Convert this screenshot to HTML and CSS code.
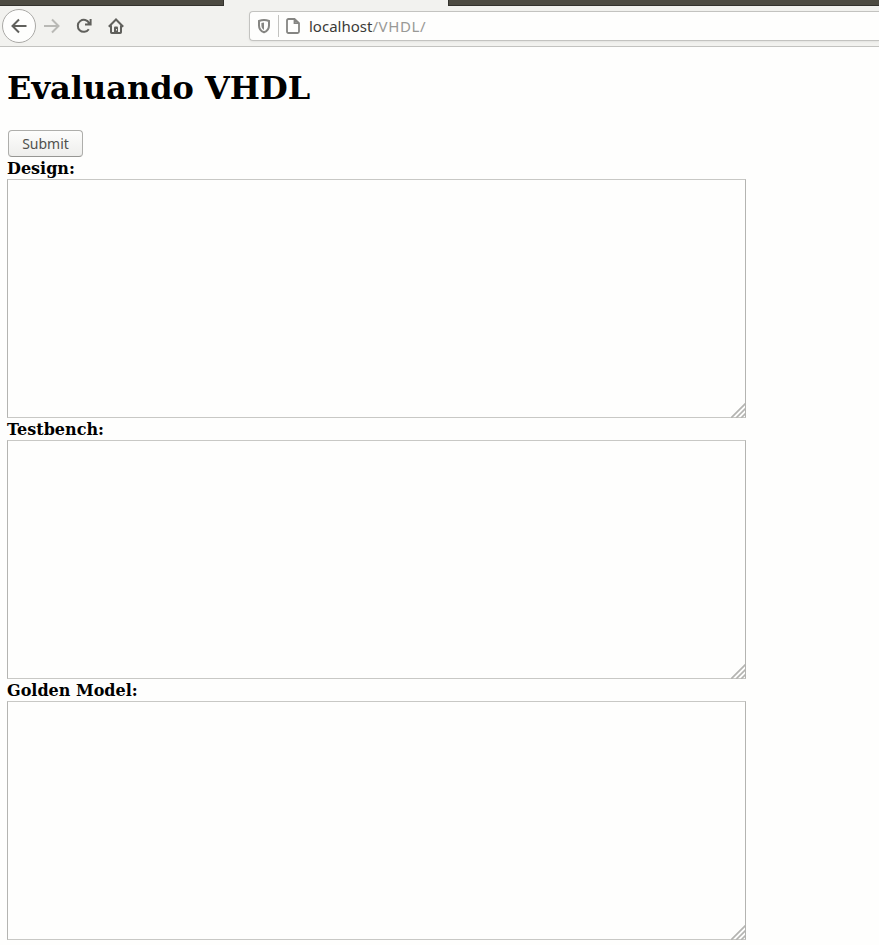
FILE: index.html
```html
<!DOCTYPE html>
<html lang="es">
<head>
<meta charset="utf-8">
<title>Evaluando VHDL</title>
<link rel="stylesheet" href="styles.css">
</head>
<body>
<header class="browser">
  <div class="tabs"><div class="tab-rest tab-left"></div><div class="tab-active"></div><div class="tab-rest tab-right"></div></div>
  <nav class="toolbar">
    <div class="back">
      <svg width="16" height="16" viewBox="0 0 16 16"><path d="M15.5 8H1.5M8 1.5L1.5 8L8 14.5"/></svg>
    </div>
    <svg class="forward" width="16" height="16" viewBox="0 0 16 16"><path d="M0 8H14.5M8 1.5L14.5 8L8 14.5"/></svg>
    <svg class="reload" width="16" height="16" viewBox="0 0 16 16"><path d="M13.2 5.2A6 6 0 1 0 12.8 11.2M14.6 1V6.6H9"/><path class="solid" d="M14 4V6H11Z"/></svg>
    <svg class="home" width="16" height="16" viewBox="0 0 16 16"><path d="M.8 8.7L8 1.5L15.2 8.7M3 7.5V14.2Q3 15 3.8 15H12.2Q13 15 13 14.2V7.5"/><path class="solid" d="M6 9.5Q6 8.5 7 8.5H9Q10 8.5 10 9.5V15H6Z"/><path class="knob" d="M8.5 11V12.5"/></svg>
    <div class="address">
      <svg class="shield" width="14" height="16" viewBox="0 0 14 16"><path d="M7 2C5 2 3.5 2.4 2 3V7.5C2 11 4 13.2 7 14.3C10 13.2 12 11 12 7.5V3C10.5 2.4 9 2 7 2Z"/><path class="solid" d="M7 4.5V12C5.2 11 4.4 9.5 4.4 7.3V4.9Z"/></svg>
      <span class="divider"></span>
      <svg class="page-icon" width="16" height="18" viewBox="0 0 16 18"><path d="M3.5 2H9.5L14 6.2V14.5Q14 16 12.5 16H3.5Q2 16 2 14.5V3.5Q2 2 3.5 2ZM9.5 2V6.2H14"/></svg>
      <span class="url">localhost<span class="path">/VHDL/</span></span>
    </div>
  </nav>
</header>
<main>
  <h1>Evaluando VHDL</h1>
  <form>
    <button type="button">Submit</button>
    <label for="design">Design:</label>
    <div class="field"><textarea id="design"></textarea><svg class="grip" width="15" height="15" viewBox="0 0 15 15"><path d="M0 15L15 0M5 15L15 5M10 15L15 10"/></svg></div>
    <label for="testbench">Testbench:</label>
    <div class="field"><textarea id="testbench"></textarea><svg class="grip" width="15" height="15" viewBox="0 0 15 15"><path d="M0 15L15 0M5 15L15 5M10 15L15 10"/></svg></div>
    <label for="golden">Golden Model:</label>
    <div class="field"><textarea id="golden"></textarea><svg class="grip" width="15" height="15" viewBox="0 0 15 15"><path d="M0 15L15 0M5 15L15 5M10 15L15 10"/></svg></div>
  </form>
</main>
</body>
</html>
```

FILE: styles.css
```css
* { box-sizing: border-box; }
body {
  margin: 0;
  height: 945px;
  overflow: hidden;
  background: #fefefd;
  color: #000;
  font-family: "DejaVu Serif", serif;
}
svg { display: block; flex: none; fill: none; stroke: #60605c; stroke-width: 2; }
.solid { fill: #60605c; stroke: none; }

.browser { height: 47px; background: #f2f2ef; border-bottom: 1px solid #c3c3c0; }
.tabs { display: flex; height: 6px; }
.tab-rest { background: #4d4b42; border-bottom: 1px solid #33322d; }
.tab-left { width: 224px; border-right: 1px solid #33322d; }
.tab-active { width: 224px; }
.tab-right { flex: 1; border-left: 1px solid #33322d; }

.toolbar { display: flex; align-items: center; height: 40px; padding-left: 2px; }
.back {
  display: flex;
  align-items: center;
  justify-content: center;
  width: 34px;
  height: 34px;
  border: 1px solid #aaa9a6;
  border-radius: 50%;
  background: #fefefd;
}
.forward { margin-left: 8px; stroke: #b9b9b5; }
.reload { margin-left: 16px; }
.home { margin-left: 16px; }
.home .knob { stroke: #e6e6e3; stroke-width: 1; }
.address {
  display: flex;
  align-items: center;
  flex: 1;
  height: 30px;
  margin-left: 125px;
  padding-left: 7px;
  border: 1px solid #c3c3c0;
  border-right: 0;
  border-radius: 4px 0 0 4px;
  background: #fefefd;
  box-shadow: 0 1px 2px #e3e3e0;
}
.shield, .page-icon { stroke: #858582; }
.shield .solid { fill: #858582; }
.divider { width: 1px; height: 22px; margin-left: 7px; background: #c3c3c0; }
.page-icon { margin-left: 6px; stroke-width: 1.8; }
.url {
  margin-left: 8px;
  color: #3a3a37;
  font: 15px/20px "Noto Sans", sans-serif;
  letter-spacing: 0;
}
.path { color: #999996; letter-spacing: 0.6px; }

main { padding: 22px 0 0 7px; }
h1 { margin: 0; height: 61px; font-size: 32px; line-height: 38px; }
button {
  display: block;
  width: 75px;
  height: 27px;
  margin: 0 0 0 1px;
  padding: 0;
  border: 1px solid #aeaeab;
  border-bottom-color: #969693;
  border-radius: 4px;
  background: linear-gradient(#fdfdfc, #eeeeec);
  color: #50504d;
  font: 14px/24px "Noto Sans", sans-serif;
}
label { display: block; height: 22px; font-size: 16px; font-weight: bold; line-height: 24px; }
.field { position: relative; width: 739px; height: 239px; }
textarea {
  display: block;
  width: 100%;
  height: 100%;
  padding: 2px;
  border: 1px solid #b4b4b1;
  border-top-color: #c8c8c5;
  border-bottom-color: #c8c8c5;
  background: #fefefd;
  resize: none;
}
.grip { position: absolute; right: 0; bottom: 0; stroke: #b4b4b1; stroke-width: 1.7; }
```
